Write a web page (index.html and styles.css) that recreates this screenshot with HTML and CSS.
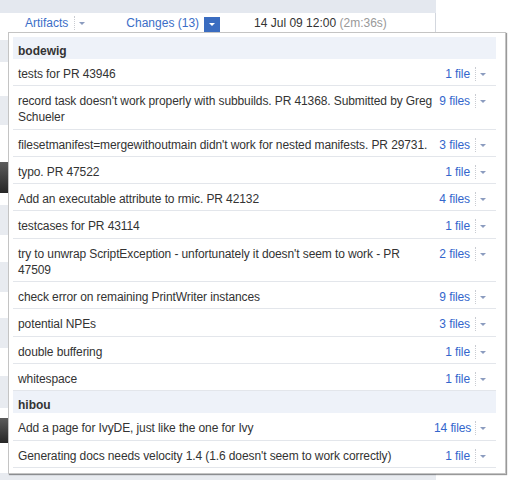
FILE: index.html
```html
<!DOCTYPE html>
<html>
<head>
<meta charset="utf-8">
<link rel="stylesheet" href="styles.css">
</head>
<body>
<div class="page">
  <div class="topband"></div>
  <div class="tabs">
    <span class="tab">Artifacts</span><span class="tsep"></span><span class="tarrow"></span>
    <span class="tab changes">Changes (13)</span><span class="tbtn"><span class="warrow"></span></span>
    <span class="date">14 Jul 09 12:00 <span class="dur">(2m:36s)</span></span>
  </div>
  <div class="under">
    <div class="b w" style="height:8px"></div>
    <div class="b g" style="height:22px"></div>
    <div class="b w" style="height:34px"></div>
    <div class="b g" style="height:29px"></div>
    <div class="b w" style="height:37px"></div>
    <div class="b d" style="height:31px"></div>
    <div class="b w" style="height:12px"></div>
    <div class="b g" style="height:30px"></div>
    <div class="b w" style="height:27px"></div>
    <div class="b g" style="height:30px"></div>
    <div class="b w" style="height:26px"></div>
    <div class="b g" style="height:30px"></div>
    <div class="b w" style="height:28px"></div>
    <div class="b g" style="height:32px"></div>
    <div class="b w" style="height:10px"></div>
    <div class="b d" style="height:25px"></div>
    <div class="b w" style="height:30px"></div>
    <div class="b g" style="height:7px"></div>
  </div>
</div>

<div class="popup">
  <div class="grp">bodewig</div>
  <div class="item"><div class="msg">tests for PR 43946</div><div class="files">1 file</div><span class="sep"></span><span class="arr"></span></div>
  <div class="item"><div class="msg">record task doesn't work properly with subbuilds. PR 41368. Submitted by Greg Schueler</div><div class="files">9 files</div><span class="sep"></span><span class="arr"></span></div>
  <div class="item"><div class="msg">filesetmanifest=mergewithoutmain didn't work for nested manifests. PR 29731.</div><div class="files">3 files</div><span class="sep"></span><span class="arr"></span></div>
  <div class="item"><div class="msg">typo. PR 47522</div><div class="files">1 file</div><span class="sep"></span><span class="arr"></span></div>
  <div class="item"><div class="msg">Add an executable attribute to rmic. PR 42132</div><div class="files">4 files</div><span class="sep"></span><span class="arr"></span></div>
  <div class="item"><div class="msg">testcases for PR 43114</div><div class="files">1 file</div><span class="sep"></span><span class="arr"></span></div>
  <div class="item"><div class="msg">try to unwrap ScriptException - unfortunately it doesn't seem to work - PR 47509</div><div class="files">2 files</div><span class="sep"></span><span class="arr"></span></div>
  <div class="item"><div class="msg">check error on remaining PrintWriter instances</div><div class="files">9 files</div><span class="sep"></span><span class="arr"></span></div>
  <div class="item"><div class="msg">potential NPEs</div><div class="files">3 files</div><span class="sep"></span><span class="arr"></span></div>
  <div class="item"><div class="msg">double buffering</div><div class="files">1 file</div><span class="sep"></span><span class="arr"></span></div>
  <div class="item"><div class="msg">whitespace</div><div class="files">1 file</div><span class="sep"></span><span class="arr"></span></div>
  <div class="grp">hibou</div>
  <div class="item"><div class="msg">Add a page for IvyDE, just like the one for Ivy</div><div class="files">14 files</div><span class="sep"></span><span class="arr"></span></div>
  <div class="item"><div class="msg">Generating docs needs velocity 1.4 (1.6 doesn't seem to work correctly)</div><div class="files">1 file</div><span class="sep"></span><span class="arr"></span></div>
</div>
</body>
</html>
```

FILE: styles.css
```css
html, body {
  margin: 0;
  padding: 0;
  background: #fff;
}
body {
  width: 516px;
  height: 480px;
  overflow: hidden;
  position: relative;
  font-family: "Liberation Sans", Arial, sans-serif;
  font-size: 12px;
  color: #333;
}
.page {
  width: 436px;
}
.topband {
  height: 13px;
  background: #e4e8ef;
}
.tabs {
  height: 19px;
  display: flex;
  align-items: center;
  padding-left: 25px;
  border-right: 1px solid #d3d7de;
  box-sizing: border-box;
  line-height: 16px;
}
.tab {
  color: #3b6ec7;
}
.tsep {
  width: 0;
  height: 14px;
  border-left: 1px dotted #c9ccd2;
  margin-left: 6px;
}
.tarrow {
  width: 0;
  height: 0;
  border-left: 3px solid transparent;
  border-right: 3px solid transparent;
  border-top: 3px solid #8b9cbf;
  margin-left: 4px;
  margin-top: 1px;
}
.changes {
  margin-left: 41px;
}
.tbtn {
  width: 16px;
  height: 15px;
  background: #3a6cc0;
  margin-left: 5px;
  margin-top: 4px;
  display: flex;
  align-items: center;
  justify-content: center;
}
.warrow {
  width: 0;
  height: 0;
  border-left: 3px solid transparent;
  border-right: 3px solid transparent;
  border-top: 3px solid #fff;
}
.date {
  margin-left: 34px;
  color: #333;
}
.dur {
  color: #999;
}
.under {
  display: flex;
  flex-direction: column;
}
.b.w { background: #fff; }
.b.g { background: #e8ebf0; }
.b.d { background: linear-gradient(#5c5c5c, #262626); }

.popup {
  position: absolute;
  left: 8px;
  top: 32px;
  width: 498px;
  box-sizing: border-box;
  background: #fff;
  border: 1px solid #c4c4c4;
  box-shadow: 1px 1px 1px rgba(0, 0, 0, 0.4);
  padding: 4px 9px 5px 4px;
  line-height: 16px;
  letter-spacing: -0.1px;
}
.grp {
  background: #eef2f9;
  font-weight: bold;
  color: #333;
  padding: 6px 5px 0;
  height: 16px;
  letter-spacing: 0;
}
.item {
  display: flex;
  align-items: flex-start;
  padding: 7px 0 3.3px 5px;
  border-bottom: 1px solid #e3e6eb;
}
.msg {
  flex: 1;
}
.files {
  width: 36px;
  text-align: right;
  color: #3366cc;
  white-space: nowrap;
}
.sep {
  width: 0;
  height: 14px;
  border-left: 1px dotted #c9ccd2;
  margin-left: 5px;
  margin-top: 1px;
}
.arr {
  width: 0;
  height: 0;
  border-left: 3px solid transparent;
  border-right: 3px solid transparent;
  border-top: 3px solid #8b9cbf;
  margin-left: 4px;
  margin-right: 10px;
  margin-top: 7px;
}
```
